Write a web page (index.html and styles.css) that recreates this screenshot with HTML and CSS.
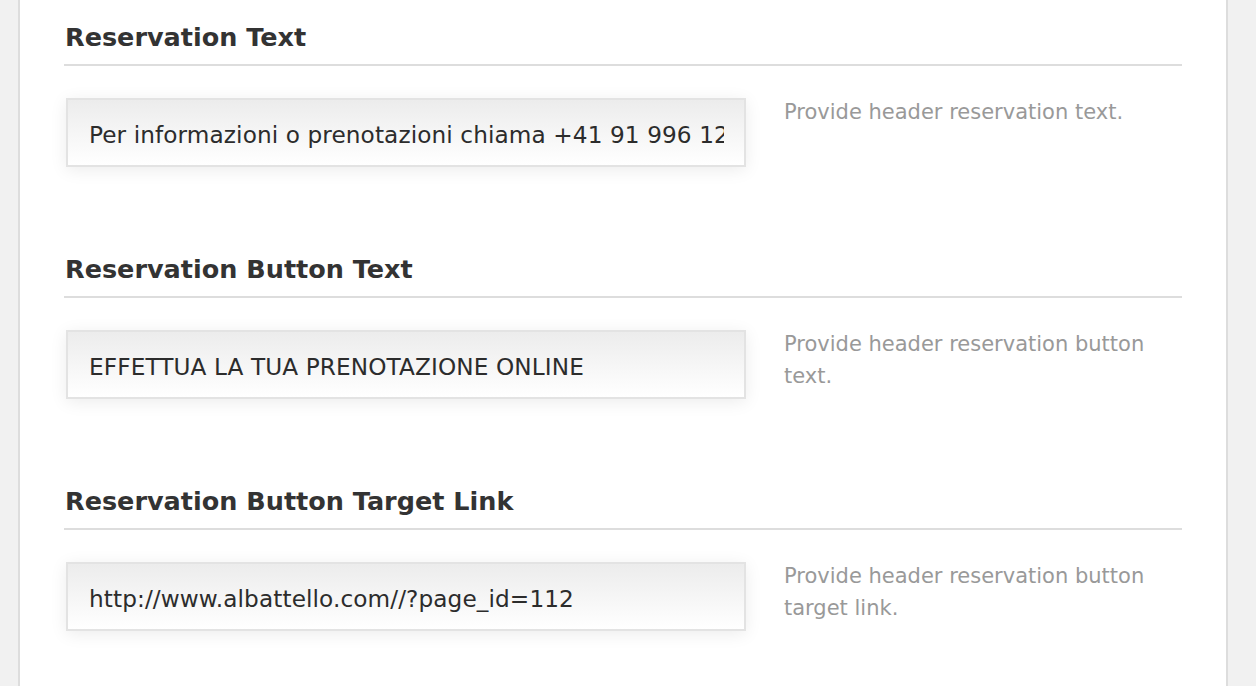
FILE: index.html
```html
<!DOCTYPE html>
<html lang="en">
<head>
<meta charset="utf-8">
<title>Header Reservation Options</title>
<link rel="stylesheet" href="styles.css">
</head>
<body>
<div class="panel">
  <section class="field">
    <h3 class="field-title">Reservation Text</h3>
    <div class="field-row">
      <input class="text-input" type="text" readonly value="Per informazioni o prenotazioni chiama +41 91 996 12 22">
      <p class="field-help">Provide header reservation text.</p>
    </div>
  </section>
  <section class="field">
    <h3 class="field-title">Reservation Button Text</h3>
    <div class="field-row">
      <input class="text-input" type="text" readonly value="EFFETTUA LA TUA PRENOTAZIONE ONLINE">
      <p class="field-help">Provide header reservation button text.</p>
    </div>
  </section>
  <section class="field">
    <h3 class="field-title">Reservation Button Target Link</h3>
    <div class="field-row">
      <input class="text-input" type="text" readonly value="http://www.albattello.com//?page_id=112">
      <p class="field-help">Provide header reservation button target link.</p>
    </div>
  </section>
</div>
</body>
</html>
```

FILE: styles.css
```css
html, body {
  margin: 0;
  padding: 0;
  height: 100%;
}

body {
  background: #f1f1f1;
  font-family: "DejaVu Sans", Verdana, sans-serif;
  overflow: hidden;
}

.panel {
  margin-left: 18px;
  width: 1118px;
  min-height: 100%;
  background: #fff;
  border-left: 2px solid #dddddd;
  border-right: 2px solid #dddddd;
  padding: 22px 44px 0 44px;
  box-sizing: content-box;
}

.field {
  margin-bottom: 87px;
}

.field-title {
  margin: 0;
  font-size: 25.5px;
  line-height: 30px;
  font-weight: bold;
  color: #333;
  padding: 0 0 12px 1px;
  border-bottom: 2px solid #dddddd;
}

.field-row {
  display: flex;
  align-items: flex-start;
  margin-top: 32px;
  padding-left: 2px;
  gap: 38px;
}

.text-input {
  flex: 0 0 680px;
  width: 680px;
  height: 69px;
  box-sizing: border-box;
  margin: 0;
  padding: 4px 20px 0 21px;
  border: 2px solid #e3e3e3;
  border-radius: 0;
  background: linear-gradient(#ececec, #ffffff);
  box-shadow: 0 3px 16px rgba(0, 0, 0, 0.08);
  font-family: "DejaVu Sans", Verdana, sans-serif;
  font-size: 23.2px;
  letter-spacing: 0.1px;
  color: #2c2c2c;
  outline: none;
}

.field-help {
  margin: -2px 0 0 0;
  width: 398px;
  font-size: 21px;
  line-height: 32px;
  color: #999;
}
```
